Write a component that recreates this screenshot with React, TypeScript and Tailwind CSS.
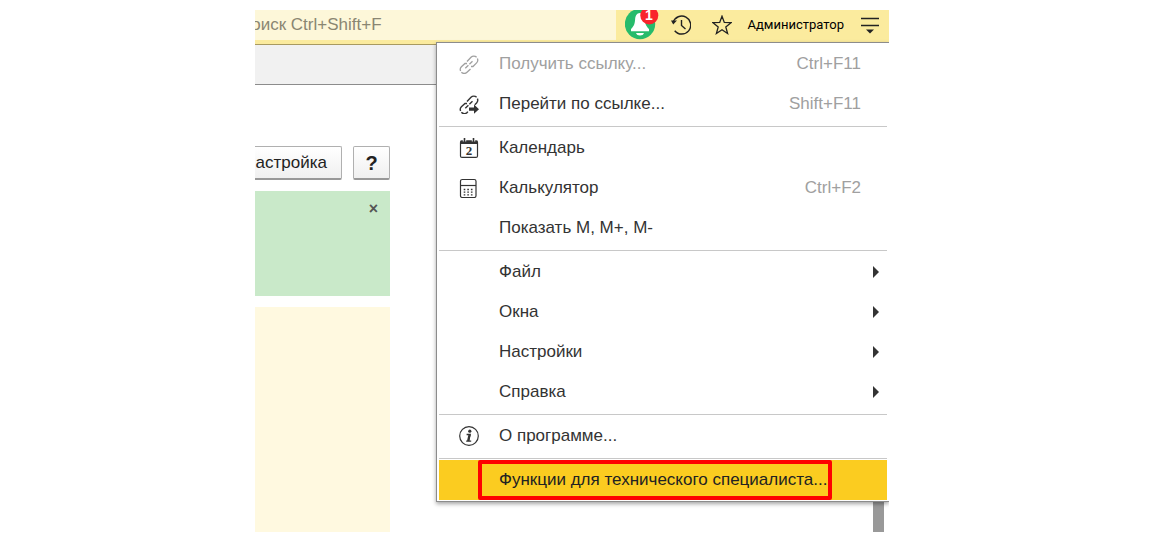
import type { ReactNode } from "react"

interface MenuItem {
  label: string
  icon?: ReactNode
  shortcut?: string
  submenu?: boolean
  disabled?: boolean
}

function LinkIcon() {
  return (
    <svg className="h-5 w-5" viewBox="0 -1 20 20" fill="none" stroke="currentColor" strokeWidth="1.3">
      <path d="M8 6.5 12 2.3a3.9 3.9 0 0 1 5.6 0" />
      <path d="M18.4 3.6a3.9 3.9 0 0 1-.8 4.3L14 11.5h-2" />
      <path d="M11.5 14 8 17.3a3.9 3.9 0 0 1-5.6 0" />
      <path d="M1.6 16a3.9 3.9 0 0 1 .8-4.300L6 8.500h2" />
      <path d="M6.300 13.300l3.100-3M10.400 9.300l3.100-3" />
    </svg>
  )
}

function FollowLinkIcon() {
  return (
    <svg className="h-5 w-5" viewBox="0 -1 20 20" fill="none" stroke="currentColor" strokeWidth="1.4">
      <path d="M8 6.5 12 2.3a3.9 3.9 0 0 1 5.6 0" />
      <path d="M18.4 3.6a3.9 3.9 0 0 1-.8 4.3l-1.800 1.800" />
      <path d="M8.800 16.600a3.900 3.900 0 0 1-6.400.7" />
      <path d="M1.6 16a3.9 3.9 0 0 1 .8-4.300L6 8.500h2" />
      <path d="M6.300 13.300l3.100-3M10.400 9.300l3.100-3" />
      <path d="M10 12.6h5v-3l5 4.600-5 4.600v-3h-5z" fill="currentColor" stroke="none" />
    </svg>
  )
}

function CalendarIcon() {
  return (
    <svg className="h-5 w-5" viewBox="0 0 20 20" fill="none" stroke="currentColor">
      <rect x="1.5" y="3" width="17" height="16.4" rx="1.5" strokeWidth="1.2" />
      <path d="M1.5 2.5h17V6h-17z" fill="currentColor" stroke="none" />
      <path d="M5.5 0v3.5M14.5 0v3.5" stroke="#fff" strokeWidth="3.4" />
      <path d="M5.5 0v4M14.5 0v4" strokeWidth="1.6" />
      <text
        x="10"
        y="17"
        textAnchor="middle"
        className="fill-current font-['Liberation_Serif',serif] text-[13px] font-bold"
        stroke="none"
      >
        2
      </text>
    </svg>
  )
}

function CalculatorIcon() {
  return (
    <svg className="h-5 w-5" viewBox="0 0 20 20" fill="none" stroke="currentColor">
      <rect x="1.5" y="1.5" width="15.5" height="18" rx="1.8" strokeWidth="1.2" />
      <path d="M1.5 7.5H17" strokeWidth="1.2" />
      <path d="M4.7 11.5h10M4.7 14.2h10M4.7 16.9h10" strokeWidth="1.3" strokeDasharray="1.6 2" />
    </svg>
  )
}

function InfoIcon() {
  return (
    <svg className="h-5 w-5" viewBox="0 0 20 20" fill="none" stroke="currentColor">
      <circle cx="10" cy="10" r="9.3" strokeWidth="1.2" />
      <circle cx="10.8" cy="5.2" r="1.6" fill="currentColor" stroke="none" />
      <path d="M7.6 8.5h3.6l-1.5 6.2M7.2 15.2h5" strokeWidth="1.3" />
      <path d="M10.6 8.4 9.1 15" strokeWidth="2.2" />
    </svg>
  )
}

const groups: MenuItem[][] = [
  [
    { label: "Получить ссылку...", icon: <LinkIcon />, shortcut: "Ctrl+F11", disabled: true },
    { label: "Перейти по ссылке...", icon: <FollowLinkIcon />, shortcut: "Shift+F11" },
  ],
  [
    { label: "Календарь", icon: <CalendarIcon /> },
    { label: "Калькулятор", icon: <CalculatorIcon />, shortcut: "Ctrl+F2" },
    { label: "Показать М, М+, М-" },
  ],
  [
    { label: "Файл", submenu: true },
    { label: "Окна", submenu: true },
    { label: "Настройки", submenu: true },
    { label: "Справка", submenu: true },
  ],
  [{ label: "О программе...", icon: <InfoIcon /> }],
]

function MenuRow({ item }: { item: MenuItem }) {
  return (
    <button
      type="button"
      disabled={item.disabled}
      className="flex h-10 w-full items-center pr-2 pl-5 text-left text-[#333] disabled:text-[#a0a0a0]"
    >
      <span className="w-10 shrink-0">{item.icon}</span>
      <span className="flex-1 pb-px">{item.label}</span>
      {item.shortcut && <span className="pb-px text-[#a0a0a0]">{item.shortcut}</span>}
      <span className="flex w-[18px] justify-end">
        {item.submenu && (
          <svg className="h-3 w-1.5" viewBox="0 0 6 12" fill="#333">
            <path d="M0 0v12l6-6z" />
          </svg>
        )}
      </span>
    </button>
  )
}

function ServiceMenu() {
  return (
    <nav className="absolute top-8 right-0 w-[453px] max-w-full border-y border-l border-[#8c8c8c] bg-white px-0.5 pt-px text-[17px] leading-5 shadow-[0_2px_4px_rgba(0,0,0,0.35)]">
      {groups.map((group, i) => (
        <div key={i} className="mb-px border-b border-[#c8c8c8] pb-0.5">
          {group.map((item) => (
            <MenuRow key={item.label} item={item} />
          ))}
        </div>
      ))}
      <button type="button" className="mb-px flex h-10 w-full bg-[#fbcc20] pl-[39px] text-left text-[#222]">
        <span className="flex h-full items-center rounded-xs border-4 border-[#fe0000] pr-px pb-px pl-[17px]">
          Функции для технического специалиста...
        </span>
      </button>
    </nav>
  )
}

function Header() {
  return (
    <header className="flex h-[35px] items-start border-b border-[#a89a60] bg-[#fbeb9e]">
      <div className="h-[30px] flex-1 overflow-hidden bg-[#fdf7d9]">
        <input
          type="text"
          aria-label="Поиск"
          placeholder="Поиск Ctrl+Shift+F"
          className="-ml-4 h-[30px] w-full bg-transparent text-[17px] outline-none placeholder:text-[#8a8672]"
        />
      </div>
      <div className="flex h-[30px] items-center px-[9px] text-[#222]">
        <button type="button" aria-label="Уведомления" className="mr-3">
          <svg className="h-[30px] w-[34px]" viewBox="0 0 34 30">
            <circle cx="15" cy="14" r="15.2" fill="#27bb6b" />
            <path
              d="M15 3c-3.5 0-4.6 3-4.900 6.500-.3 4-1 6.500-4.100 9.500v2.300h18V19c-3.100-3-3.800-5.500-4.100-9.500C19.600 6 18.500 3 15 3z"
              fill="#fff"
            />
            <path d="M11 23h8c-.5 1.7-2 2.500-4 2.500s-3.500-.8-4-2.500z" fill="#fff" />
            <circle cx="24.3" cy="5.5" r="9" fill="#f9242c" />
            <text x="24" y="10" textAnchor="middle" className="fill-white text-sm font-bold">
              1
            </text>
          </svg>
        </button>
        <button type="button" aria-label="История" className="mr-[21px]">
          <svg className="h-5 w-5" viewBox="0 0 20 20" fill="none" stroke="currentColor" strokeWidth="1.4">
            <path d="M2.1 7.5a9 9 0 1 1 1.600 8.200" />
            <path d="M10.5 5v5.500l4 3.500" />
            <path d="M0 5.500h6L2.200 9.500z" fill="currentColor" stroke="none" />
          </svg>
        </button>
        <button type="button" aria-label="Избранное" className="mr-4">
          <svg className="h-5 w-5" viewBox="0 0 20 20" fill="none" stroke="currentColor" strokeWidth="1.3">
            <path d="m10 1.2 2.3 6.200 6.700.3-5.200 4.200 1.800 6.600-5.600-3.700-5.600 3.700 1.800-6.600L1 7.700l6.700-.3z" />
          </svg>
        </button>
        <button type="button" className="mr-4 font-[Roboto,sans-serif] text-[13px] text-black">
          Администратор
        </button>
        <button type="button" aria-label="Сервис и настройки">
          <svg className="h-5 w-5" viewBox="0 0 20 20" fill="none" stroke="currentColor" strokeWidth="1.5">
            <path d="M1 3.500h18M1 10.500h18" />
            <path d="M6 14.500h8l-4 4z" fill="currentColor" stroke="none" />
          </svg>
        </button>
      </div>
    </header>
  )
}

export default function App() {
  return (
    <div className="min-h-screen bg-white pt-2.5 pr-[9px] font-['Liberation_Sans',Arial,sans-serif]">
      <div className="relative mx-auto max-w-[634px] overflow-hidden">
        <Header />
        <div className="h-10 border-b border-[#8c8c8c] bg-[#f1f1f1]" />

        <div className="flex justify-between">
          <main className="w-[135px] pt-[61px]">
            <div className="flex justify-end gap-[11px] overflow-hidden text-[17px] text-[#222]">
              <button
                type="button"
                className="h-[34px] shrink-0 rounded-xs border border-b-2 border-[#b0b0b0] border-b-[#989898] bg-linear-to-b from-white to-[#f0f0f0] px-3.5"
              >
                Настройка
              </button>
              <button
                type="button"
                className="h-[34px] w-[37px] shrink-0 rounded-xs border border-b-2 border-[#b0b0b0] border-b-[#989898] bg-linear-to-b from-white to-[#f0f0f0] text-xl font-bold"
              >
                ?
              </button>
            </div>
            <section className="mt-[11px] flex h-[105px] items-start justify-end bg-[#c9e9c9] px-3 py-2">
              <button type="button" aria-label="Закрыть" className="text-base leading-5 font-bold text-[#555]">
                ×
              </button>
            </section>
            <section className="mt-[11px] h-[225px] bg-[#fff9e0]" />
          </main>
          <div className="mr-[5px] w-[11px] bg-[#999]" />
        </div>

        <ServiceMenu />
      </div>
    </div>
  )
}
